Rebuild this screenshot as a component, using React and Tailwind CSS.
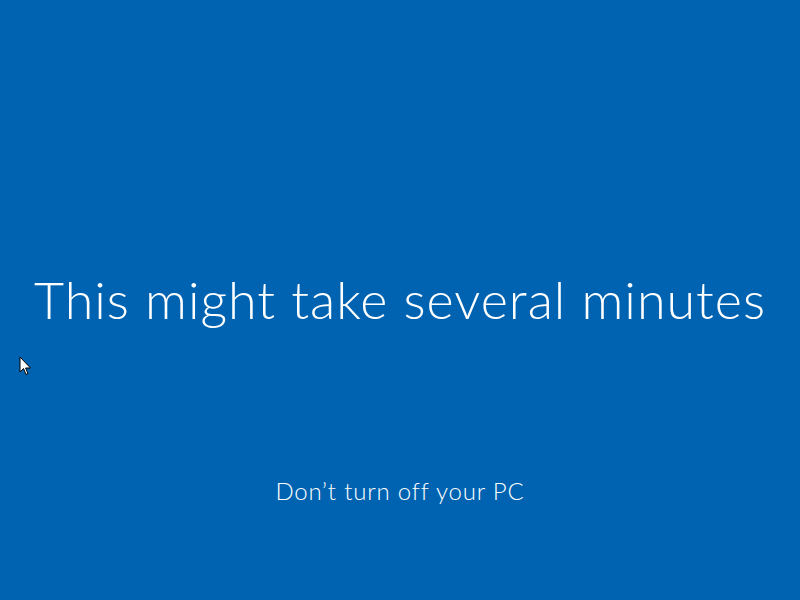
export default function App() {
  return (
    <div
      className="relative w-[800px] h-[600px] bg-[#0063b1] text-white overflow-hidden"
      style={{ fontFamily: 'Lato, "Open Sans", sans-serif' }}
    >
      <div className="flex flex-col items-center h-full">
        <h1 className="mt-[263px] text-[52px] font-light leading-[72px] tracking-[1px] whitespace-nowrap">
          This might take several minutes
        </h1>
        <p className="mt-[140px] text-[24px] font-light leading-[32px] tracking-[0.8px] whitespace-nowrap">
          Don’t turn off your PC
        </p>
      </div>

      {/* mouse pointer */}
      <svg
        className="absolute left-[19px] top-[356px]"
        width="13"
        height="21"
        viewBox="0 0 13 21"
      >
        <path
          d="M1 1 L1 16 L4.5 12.5 L7 18.5 L9 17.6 L6.6 12 L11.5 12 Z"
          fill="#ffffff"
          stroke="#000000"
          strokeWidth="1"
          strokeLinejoin="miter"
        />
      </svg>
    </div>
  );
}
